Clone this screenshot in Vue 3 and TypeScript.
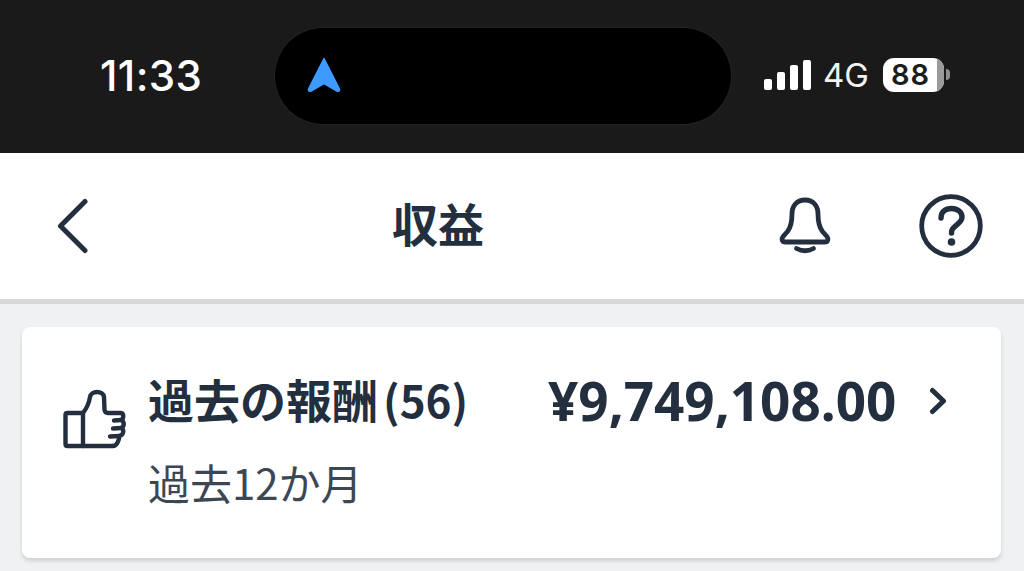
<script setup lang="ts">
const title: string = '収益'
const bars: number[] = [11, 18, 25, 30]
</script>

<template>
  <div class="screen">
    <header class="status">
      <span class="time">11:33</span>
      <div class="island">
        <svg class="nav-arrow" width="36" height="38" viewBox="0 0 36 38">
          <path d="M18 2.5 L33.5 33 Q34 36 31 35 L18 27.5 L5 35 Q2 36 2.5 33 Z" fill="#3d9bff" stroke="#3d9bff" stroke-width="1.5" stroke-linejoin="round" />
        </svg>
      </div>
      <div class="indicators">
        <div class="bars">
          <i v-for="h in bars" :key="h" class="bar" :style="{ height: h + 'px' }"></i>
        </div>
        <span class="net">4G</span>
        <div class="battery">
          <div class="cell"><span class="level">88</span><i class="rest"></i></div>
          <i class="nub"></i>
        </div>
      </div>
    </header>

    <nav class="navbar">
      <svg class="back" width="34" height="56" viewBox="0 0 34 56">
        <path d="M29 3.5 L4.5 28 L29 52.5" fill="none" stroke="#232f3e" stroke-width="5" stroke-linecap="round" stroke-linejoin="round" />
      </svg>
      <h1 class="title">{{ title }}</h1>
      <div class="actions">
        <svg width="54" height="60" viewBox="0 0 54 60">
          <path d="M27 4 C18.5 4 14 10 14 18 C14 26 13 31 9.5 35.5 L5.5 40 C3 43 4 46 7.5 46 L46.5 46 C50 46 51 43 48.5 40 L44.5 35.5 C41 31 40 26 40 18 C40 10 35.5 4 27 4 Z" fill="none" stroke="#232f3e" stroke-width="4.8" stroke-linejoin="round" />
          <path d="M18.5 52.5 Q27 57 35.5 52.5" fill="none" stroke="#232f3e" stroke-width="4.8" stroke-linecap="round" />
        </svg>
        <svg width="64" height="64" viewBox="0 0 64 64">
          <circle cx="32" cy="32" r="29.3" fill="none" stroke="#232f3e" stroke-width="4.8" />
          <path d="M22 24 C22 17.5 26.5 14.5 32.5 14.5 C38.5 14.5 43 18 43 23 C43 29 36.5 30.5 33.5 35 C32.5 36.5 32.5 37.5 32.5 39" fill="none" stroke="#232f3e" stroke-width="5.4" stroke-linecap="round" />
          <circle cx="32.5" cy="48" r="3.8" fill="#232f3e" />
        </svg>
      </div>
    </nav>

    <main class="content">
      <section class="card">
        <svg class="thumb" width="64" height="60" viewBox="0 0 64 60">
          <path d="M4.5 24 L20 24 L20 57 L4.5 57 Q2.5 57 2.5 55 L2.5 26 Q2.5 24 4.5 24 Z" fill="none" stroke="#232f3e" stroke-width="4.4" stroke-linejoin="round" />
          <path d="M20 24 C24 19 26 14 27 8 C28 1.5 40 1 41 8 L41.5 21 Q42 24 45 24 L57.5 24 C61 24 61 29 58.5 31 C61.5 33 61.5 37 58.5 39 C61.5 41 60.5 46 56.5 47 C56 52 53.5 57 50 57 L20 57" fill="none" stroke="#232f3e" stroke-width="4.4" stroke-linejoin="round" stroke-linecap="round" />
          <path d="M58 31 L51 31.5 M58 39 L50 39.5 M56 47 L47 47.5" fill="none" stroke="#232f3e" stroke-width="4.4" stroke-linecap="round" />
        </svg>
        <div class="body">
          <div class="row">
            <span class="label">過去の報酬<span class="count">(56)</span></span>
            <span class="amount">¥9,749,108.00</span>
            <svg class="chev" width="18" height="28" viewBox="0 0 18 28">
              <path d="M3.5 3.5 L14.5 14 L3.5 24.5" fill="none" stroke="#232f3e" stroke-width="5" stroke-linecap="round" stroke-linejoin="round" />
            </svg>
          </div>
          <p class="sub">過去12か月</p>
        </div>
      </section>
    </main>
  </div>
</template>

<style scoped>
.screen {
  width: 1024px;
  height: 571px;
  overflow: hidden;
  display: flex;
  flex-direction: column;
  background: #f0f1f3;
  font-family: "Noto Sans", "Noto Sans CJK JP", sans-serif;
  color: #232f3e;
}
.status {
  height: 153px;
  flex: none;
  box-sizing: border-box;
  background: #1a1a1a;
  display: flex;
  align-items: center;
  padding: 0 74px 0 100px;
}
.time {
  width: 175px;
  flex: none;
  margin-top: -3px;
  color: #fff;
  font-family: Inter, "Liberation Sans", sans-serif;
  font-size: 42px;
  font-weight: 500;
  letter-spacing: 0.4px;
}
.island {
  width: 456px;
  height: 96px;
  flex: none;
  margin-top: -2px;
  box-sizing: border-box;
  padding-left: 31px;
  border-radius: 48px;
  background: #000;
  box-shadow: 0 0 0 1px #222;
  display: flex;
  align-items: center;
}
.nav-arrow { margin-top: -2px; }
.indicators {
  margin-left: 33px;
  display: flex;
  align-items: center;
}
.bars {
  display: flex;
  align-items: flex-end;
  gap: 5px;
  height: 30px;
  margin-top: -3px;
}
.bar {
  width: 8px;
  border-radius: 2px;
  background: #fff;
}
.net {
  margin-left: 12px;
  margin-top: -3px;
  color: #f2f2f2;
  font-family: Inter, "Liberation Sans", sans-serif;
  font-size: 33px;
  font-weight: 400;
}
.battery {
  margin-left: 14px;
  margin-top: -4px;
  display: flex;
  align-items: center;
  gap: 2px;
}
.cell {
  width: 61px;
  height: 34px;
  border-radius: 11px;
  overflow: hidden;
  background: #fff;
  display: flex;
  align-items: center;
}
.level {
  flex: 1;
  text-align: center;
  padding-left: 1px;
  color: #1c1c1c;
  font-family: Inter, "Liberation Sans", sans-serif;
  font-size: 29px;
  font-weight: 600;
  letter-spacing: 1px;
  line-height: 34px;
}
.rest {
  width: 7px;
  height: 100%;
  background: #9a9a9a;
}
.nub {
  width: 4px;
  height: 11px;
  border-radius: 0 4px 4px 0;
  background: #8f8f8f;
}
.navbar {
  height: 151px;
  flex: none;
  box-sizing: border-box;
  background: #fff;
  border-bottom: 5px solid #d8d8d8;
  position: relative;
  display: flex;
  align-items: center;
  justify-content: space-between;
  padding: 0 41px 0 56px;
}
.title {
  position: absolute;
  left: 392px;
  top: 35px;
  margin: 0;
  font-family: "Noto Sans CJK JP", sans-serif;
  font-size: 46px;
  line-height: 68px;
  font-weight: 700;
}
.actions {
  display: flex;
  align-items: center;
  gap: 87px;
}
.content {
  flex: 1;
  padding: 23px 23px 0 22px;
}
.card {
  height: 231px;
  box-sizing: border-box;
  background: #fff;
  border-radius: 8px;
  box-shadow: 0 3px 4px rgba(0, 0, 0, 0.14);
  display: flex;
  align-items: flex-start;
  padding: 42px 0 0 41px;
}
.thumb {
  margin-top: 20px;
  flex: none;
}
.body {
  margin-left: 21px;
  flex: 1;
}
.row {
  display: flex;
  align-items: center;
  height: 64px;
}
.label {
  width: 400px;
  flex: none;
  margin-top: -6px;
  font-family: "Noto Sans CJK JP", sans-serif;
  font-size: 46px;
  font-weight: 700;
  white-space: nowrap;
  line-height: 64px;
}
.count {
  font-size: 44px;
  margin-left: 5px;
}
.amount {
  margin-top: -2px;
  font-family: "Noto Sans", sans-serif;
  font-size: 53px;
  font-weight: 700;
  white-space: nowrap;
}
.chev { margin-left: 33px; }
.sub {
  margin: 21px 0 0;
  font-family: "Noto Sans CJK JP", sans-serif;
  font-size: 42px;
  line-height: 56px;
  color: #3d4754;
}
</style>

<style>
html, body { margin: 0; background: #f0f1f3; }
</style>
